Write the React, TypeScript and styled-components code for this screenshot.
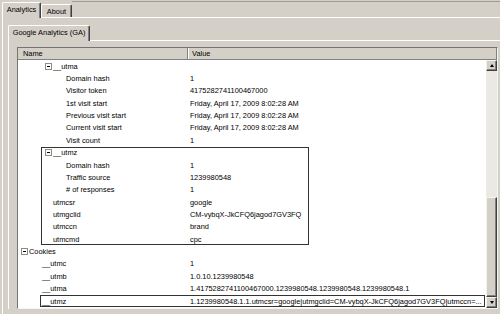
import styled, { createGlobalStyle } from 'styled-components';

const GlobalStyle = createGlobalStyle`
	html, body {
		margin: 0;
		padding: 0;
	}
	body {
		background: #d4d0c8;
		font-family: 'Liberation Sans', Arial, sans-serif;
		font-size: 7.4px;
		color: #000;
	}
`;

const StyledWindow = styled.div`
	width: 500px;
	height: 314px;
	overflow: hidden;
	background: #d4d0c8;
`;

const StyledTabStrip = styled.div<{ $height: number; $inset?: number }>`
	display: flex;
	align-items: flex-end;
	height: ${({ $height }) => $height}px;
	padding-left: ${({ $inset }) => $inset ?? 0}px;
`;

const StyledTab = styled.div<{ $active?: boolean; $width: number }>`
	position: relative;
	z-index: 1;
	box-sizing: border-box;
	display: flex;
	align-items: center;
	justify-content: center;
	width: ${({ $width }) => $width}px;
	height: ${({ $active }) => ($active ? 16 : 13)}px;
	margin-bottom: ${({ $active }) => ($active ? -1 : 0)}px;
	padding-bottom: ${({ $active }) => ($active ? 2 : 0)}px;
	background: #d4d0c8;
	border-top: 1px solid #fff;
	border-left: 1px solid #fff;
	border-right: 1px solid #404040;
	box-shadow: inset -1px 0 #808080;
	border-radius: 2px 2px 0 0;
	white-space: nowrap;
`;

const StyledTabFiller = styled.div`
	flex: 1;
	align-self: flex-start;
	margin-top: 1px;
	border-top: 1px solid #9d9b95;
`;

const StyledPanel = styled.div<{ $padTop: number; $padLeft: number }>`
	border-top: 1px solid #fff;
	border-left: 1px solid #fff;
	padding: ${({ $padTop, $padLeft }) => `${$padTop}px 0 0 ${$padLeft}px`};
`;

const StyledOuterPanel = styled(StyledPanel)`
	margin-left: 2px;
	height: 320px;
`;

const StyledList = styled.div`
	box-sizing: border-box;
	display: flex;
	flex-direction: column;
	width: 481px;
	height: 262px;
	border: 1px solid;
	border-color: #747474 #f4f4f4 #f4f4f4 #747474;
	background: #fff;
`;

const StyledHeader = styled.div`
	display: flex;
	flex: none;
	height: 12px;
	box-sizing: border-box;
	border-bottom: 1px solid #808080;
	background: #d4d0c8;
`;

const StyledHeaderCell = styled.div<{ $width?: number }>`
	box-sizing: border-box;
	display: flex;
	align-items: center;
	${({ $width }) => ($width ? `width: ${$width}px; flex: none;` : 'flex: 1;')}
	padding-left: ${({ $width }) => ($width ? 5 : 3)}px;
	border-left: 1px solid #fff;
	border-right: 1px solid #808080;
	&:first-child {
		border-left: none;
	}
`;

const StyledBody = styled.div`
	display: flex;
	flex: 1;
	min-height: 0;
`;

const StyledRows = styled.div`
	flex: 1;
	overflow: hidden;
`;

// outline drawn over the selected cookie group
const StyledGroup = styled.div`
	position: relative;
	&::after {
		content: '';
		position: absolute;
		top: 0;
		bottom: 0;
		left: 23px;
		width: 268px;
		box-sizing: border-box;
		border: 1px solid #333;
		pointer-events: none;
	}
`;

const StyledRow = styled.div<{ $outlined?: boolean }>`
	position: relative;
	display: grid;
	grid-template-columns: 170px 1fr;
	align-items: center;
	height: 12.37px;
	white-space: nowrap;
	${({ $outlined }) =>
		$outlined &&
		`
		&::after {
			content: '';
			position: absolute;
			top: 0;
			bottom: 0;
			left: 22px;
			right: 1px;
			border: 1px solid #333;
			pointer-events: none;
		}
	`}
`;

const StyledNameCell = styled.div<{ $indent: number }>`
	display: flex;
	align-items: center;
	gap: 1px;
	padding-left: ${({ $indent }) => $indent}px;
	overflow: hidden;
`;

const StyledValueCell = styled.div`
	padding-left: 2px;
	overflow: hidden;
`;

const StyledExpander = styled.span`
	position: relative;
	flex: none;
	box-sizing: border-box;
	width: 7px;
	height: 7px;
	border: 1px solid #8c8c8c;
	background: #fff;
	&::after {
		content: '';
		position: absolute;
		left: 1px;
		top: 2px;
		width: 3px;
		height: 1px;
		background: #000;
	}
`;

const StyledScrollbar = styled.div`
	display: flex;
	flex-direction: column;
	width: 11px;
	flex: none;
	background: #ebe9e4;
`;

const StyledScrollButton = styled.div<{ $down?: boolean }>`
	box-sizing: border-box;
	display: flex;
	align-items: center;
	justify-content: center;
	height: 11px;
	flex: none;
	background: #d4d0c8;
	border: 1px solid;
	border-color: #f4f3ee #404040 #404040 #f4f3ee;
	box-shadow: inset -1px -1px #808080;
	&::after {
		content: '';
		width: 0;
		height: 0;
		border-left: 2.5px solid transparent;
		border-right: 2.5px solid transparent;
		${({ $down }) => ($down ? 'border-top: 3px solid #000;' : 'border-bottom: 3px solid #000;')}
	}
`;

const StyledTrack = styled.div`
	flex: 1;
`;

const StyledThumb = styled.div`
	box-sizing: border-box;
	height: 100px;
	flex: none;
	background: #d4d0c8;
	border: 1px solid;
	border-color: #f4f3ee #404040 #404040 #f4f3ee;
	box-shadow: inset -1px -1px #808080;
`;

interface RowType {
	name: string;
	value: string;
	indent: number;
	expander?: boolean;
}

const utmaRows: RowType[] = [
	{ name: '__utma', value: '', indent: 27, expander: true },
	{ name: 'Domain hash', value: '1', indent: 48 },
	{ name: 'Visitor token', value: '4175282741100467000', indent: 48 },
	{ name: '1st visit start', value: 'Friday, April 17, 2009 8:02:28 AM', indent: 48 },
	{ name: 'Previous visit start', value: 'Friday, April 17, 2009 8:02:28 AM', indent: 48 },
	{ name: 'Current visit start', value: 'Friday, April 17, 2009 8:02:28 AM', indent: 48 },
	{ name: 'Visit count', value: '1', indent: 48 },
];

const utmzRows: RowType[] = [
	{ name: '__utmz', value: '', indent: 27, expander: true },
	{ name: 'Domain hash', value: '1', indent: 48 },
	{ name: 'Traffic source', value: '1239980548', indent: 48 },
	{ name: '# of responses', value: '1', indent: 48 },
	{ name: 'utmcsr', value: 'google', indent: 35 },
	{ name: 'utmgclid', value: 'CM-vybqX-JkCFQ6jagod7GV3FQ', indent: 35 },
	{ name: 'utmccn', value: 'brand', indent: 35 },
	{ name: 'utmcmd', value: 'cpc', indent: 35 },
];

const cookieRows: RowType[] = [
	{ name: 'Cookies', value: '', indent: 3, expander: true },
	{ name: '__utmc', value: '1', indent: 24 },
	{ name: '__utmb', value: '1.0.10.1239980548', indent: 24 },
	{ name: '__utma', value: '1.4175282741100467000.1239980548.1239980548.1239980548.1', indent: 24 },
];

function TreeRow({ name, value, indent, expander, outlined }: RowType & { outlined?: boolean }) {
	return (
		<StyledRow $outlined={outlined}>
			<StyledNameCell $indent={indent}>
				{expander && <StyledExpander />}
				<span>{name}</span>
			</StyledNameCell>
			<StyledValueCell>{value}</StyledValueCell>
		</StyledRow>
	);
}

export default function App() {
	return (
		<StyledWindow>
			<GlobalStyle />
			<StyledTabStrip $height={17} $inset={2}>
				<StyledTab $active $width={39}>
					Analytics
				</StyledTab>
				<StyledTab $width={31}>About</StyledTab>
				<StyledTabFiller />
			</StyledTabStrip>
			<StyledOuterPanel $padTop={0} $padLeft={5}>
				<StyledTabStrip $height={22}>
					<StyledTab $active $width={82}>
						Google Analytics (GA)
					</StyledTab>
				</StyledTabStrip>
				<StyledPanel $padTop={6} $padLeft={8}>
					<StyledList>
						<StyledHeader>
							<StyledHeaderCell $width={170}>Name</StyledHeaderCell>
							<StyledHeaderCell>Value</StyledHeaderCell>
						</StyledHeader>
						<StyledBody>
							<StyledRows>
								{utmaRows.map((row, index) => (
									<TreeRow key={`utma-${index}`} {...row} />
								))}
								<StyledGroup>
									{utmzRows.map((row, index) => (
										<TreeRow key={`utmz-${index}`} {...row} />
									))}
								</StyledGroup>
								{cookieRows.map((row, index) => (
									<TreeRow key={`cookie-${index}`} {...row} />
								))}
								<TreeRow
									outlined
									name="__utmz"
									indent={24}
									value="1.1239980548.1.1.utmcsr=google|utmgclid=CM-vybqX-JkCFQ6jagod7GV3FQ|utmccn=..."
								/>
							</StyledRows>
							<StyledScrollbar>
								<StyledScrollButton />
								<StyledTrack />
								<StyledThumb />
								<StyledScrollButton $down />
							</StyledScrollbar>
						</StyledBody>
					</StyledList>
				</StyledPanel>
			</StyledOuterPanel>
		</StyledWindow>
	);
}
